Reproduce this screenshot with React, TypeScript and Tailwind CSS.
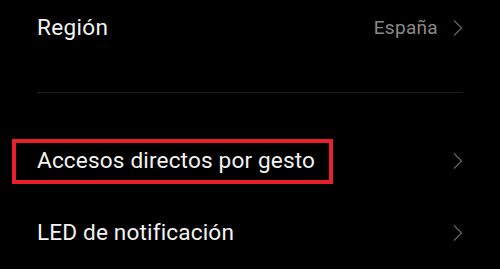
import React from 'react';

const Chevron = () => (
    <svg width="10" height="18" viewBox="0 0 10 18" fill="none" className="shrink-0">
        <path d="M1 1.5 L8.5 9 L1 16.5" stroke="#5a5a5a" strokeWidth="1.5" />
    </svg>
);

const Row: React.FC<{ label: string; value?: string; highlight?: boolean }> = ({ label, value, highlight }) => (
    <div className="relative flex items-center justify-between h-[72px] pl-[37px] pr-[37px]">
        <span className="text-[22.6px] text-[#f2f2f2] tracking-[0.15px]">{label}</span>
        <div className="flex items-center gap-[15px]">
            {value && <span className="text-[19px] text-[#8a8a8a]">{value}</span>}
            <Chevron />
        </div>
        {highlight && (
            <div className="absolute left-[12px] top-[14px] w-[321px] h-[45px] border-4 border-[#e8202a]" />
        )}
    </div>
);

export default function App() {
    return (
        <div className="w-[500px] h-[269px] bg-black overflow-hidden" style={{ fontFamily: 'Roboto, "Noto Sans", sans-serif' }}>
            <div className="flex items-center justify-between h-[56px] pl-[37px] pr-[37px]">
                <span className="text-[22.6px] text-[#f2f2f2] tracking-[0.3px]">Región</span>
                <div className="flex items-center gap-[15px]">
                    <span className="text-[19px] text-[#8a8a8a] tracking-[0.3px]">España</span>
                    <Chevron />
                </div>
            </div>
            <div className="h-[36px]" />
            <div className="h-px bg-[#1f1f1f] ml-[37px] mr-[37px]" />
            <div className="h-[32px]" />
            <Row label="Accesos directos por gesto" highlight />
            <Row label="LED de notificación" />
        </div>
    );
}
